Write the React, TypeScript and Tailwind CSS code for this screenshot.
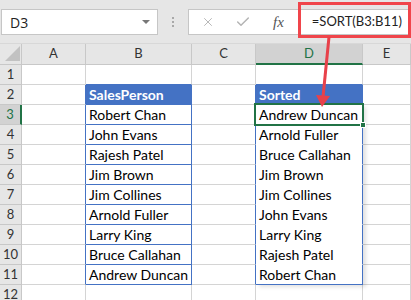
import { Check, X } from "lucide-react";

// Excel-style sheet: SORT formula spilling into column D

const salesPeople = [
  "Robert Chan",
  "John Evans",
  "Rajesh Patel",
  "Jim Brown",
  "Jim Collines",
  "Arnold Fuller",
  "Larry King",
  "Bruce Callahan",
  "Andrew Duncan",
];

const sorted = [...salesPeople].sort();

const rows = [1, 2, 3, 4, 5, 6, 7, 8, 9, 10, 11, 12];

function cellText(col: "B" | "D", r: number) {
  if (r === 2) return col === "B" ? "SalesPerson" : "Sorted";
  if (r >= 3 && r <= 11) return col === "B" ? salesPeople[r - 3] : sorted[r - 3];
  return "";
}

function TopBar() {
  return (
    <div className="h-[44px] bg-[#e6e6e6] flex items-start pt-[9px] border-b border-[#d8d8d8]">
      <div className="ml-[1px] w-[157px] h-[26px] bg-white border border-[#c6c6c6] flex items-center justify-between pl-[8px] pr-[7px]">
        <span className="text-[14px] text-[#222] font-['Open_Sans',sans-serif]">D3</span>
        <span className="w-0 h-0 border-l-[4px] border-r-[4px] border-t-[4px] border-l-transparent border-r-transparent border-t-[#777]" />
      </div>
      <div className="ml-[14px] mt-[8px] flex flex-col gap-[2px]">
        <span className="w-[2px] h-[2px] bg-[#a8a8a8]" />
        <span className="w-[2px] h-[2px] bg-[#a8a8a8]" />
        <span className="w-[2px] h-[2px] bg-[#a8a8a8]" />
      </div>
      <div className="ml-[14px] flex-1 h-[26px] bg-white border border-[#c6c6c6] flex items-center">
        <X className="ml-[12px] w-[14px] h-[14px] text-[#b4b4b4]" strokeWidth={1.6} />
        <Check className="ml-[20px] w-[16px] h-[16px] text-[#b4b4b4]" strokeWidth={2.2} />
        <span className="ml-[22px] text-[15px] italic text-[#555] font-['Liberation_Serif',serif]">fx</span>
        <span className="ml-[28px] text-[13px] text-[#222] font-['Lato',sans-serif]">=SORT(B3:B11)</span>
      </div>
    </div>
  );
}

function ColumnHeaders() {
  const head = "h-[21px] bg-[#e6e6e6] border-r border-b border-[#c8c8c8] flex items-center justify-center text-[13px] text-[#333]";
  return (
    <>
      <div className="h-[21px] bg-[#e6e6e6] border-r border-b border-[#c8c8c8] relative">
        <span className="absolute left-[5px] bottom-[3px] w-0 h-0 border-l-[15px] border-b-[15px] border-l-transparent border-b-[#c2c2c2]" />
      </div>
      <div className={head}>A</div>
      <div className={head}>B</div>
      <div className={head}>C</div>
      <div className="h-[21px] bg-[#d2d2d2] border-r border-[#c8c8c8] border-b-2 border-b-[#217346] flex items-center justify-center text-[13px] text-[#217346]">
        D
      </div>
      <div className={head}>E</div>
    </>
  );
}

function SheetRow({ r }: { r: number }) {
  const inTable = r >= 2 && r <= 11;
  const text = "h-[20px] flex items-end pl-[3px] pb-[1px] text-[14px] leading-[17px] text-black whitespace-nowrap overflow-hidden";
  return (
    <>
      <div
        className={
          r === 3
            ? "h-[20px] bg-[#d2d2d2] border-b border-[#c8c8c8] border-r-2 border-r-[#217346] flex items-center justify-center text-[13px] text-[#217346]"
            : "h-[20px] bg-[#e6e6e6] border-r border-b border-[#c8c8c8] flex items-center justify-center text-[13px] text-[#333]"
        }
      >
        {r}
      </div>
      <div className={inTable ? "h-[20px] border-b border-[#d4d4d4] border-r border-r-[#4472c4]" : "h-[20px] border-b border-r border-[#d4d4d4]"} />
      <div
        className={
          r === 2
            ? `${text} bg-[#4472c4] text-white font-bold border-b border-r border-[#4472c4]`
            : r <= 11
            ? `${text} border-b border-r ${r === 1 ? "border-b-[#4472c4] border-r-[#d4d4d4]" : "border-[#4472c4]"}`
            : `${text} border-b border-r border-[#d4d4d4]`
        }
      >
        {cellText("B", r)}
      </div>
      <div className={inTable ? "h-[20px] border-b border-[#d4d4d4] border-r border-r-[#4472c4]" : "h-[20px] border-b border-r border-[#d4d4d4]"} />
      <div
        className={
          r === 1
            ? `${text} border-b border-r border-b-[#4472c4] border-r-[#d4d4d4]`
            : r === 2
            ? `${text} bg-[#4472c4] text-white font-bold border-b border-r border-[#4472c4]`
            : r <= 10
            ? `${text} border-b border-r border-b-white border-r-[#4472c4]`
            : r === 11
            ? `${text} border-b border-r border-[#4472c4]`
            : `${text} border-b border-r border-[#d4d4d4]`
        }
      >
        {cellText("D", r)}
      </div>
      <div className="h-[20px] border-b border-r border-[#d4d4d4]" />
    </>
  );
}

export default function App() {
  return (
    <div className="w-[411px] h-[300px] overflow-hidden bg-white relative font-['Lato',sans-serif]">
      <TopBar />
      <div className="grid grid-cols-[22px_64px_106px_64px_107px_1fr]">
        <ColumnHeaders />
        {rows.map((r) => (
          <SheetRow key={r} r={r} />
        ))}
      </div>

      {/* spill range shadow, active cell and fill handle */}
      <div className="absolute left-[256px] top-[105px] w-[107px] h-[180px] shadow-[3px_2px_4px_rgba(0,0,0,0.12)] pointer-events-none" />
      <div className="absolute left-[254px] top-[103px] w-[110px] h-[23px] border-2 border-[#217346] pointer-events-none" />
      <div className="absolute left-[360px] top-[122px] w-[6px] h-[6px] bg-[#217346] border border-white" />

      {/* callout */}
      <div className="absolute left-[298px] top-[2px] w-[113px] h-[36px] border-[3px] border-[#f0454b]" />
      <svg className="absolute left-0 top-0 pointer-events-none" width="411" height="300">
        <line x1="329" y1="37" x2="323" y2="97" stroke="#e8414a" strokeWidth="3" />
        <polygon points="316,95 330,96 322,107" fill="#e8414a" />
      </svg>
    </div>
  );
}
